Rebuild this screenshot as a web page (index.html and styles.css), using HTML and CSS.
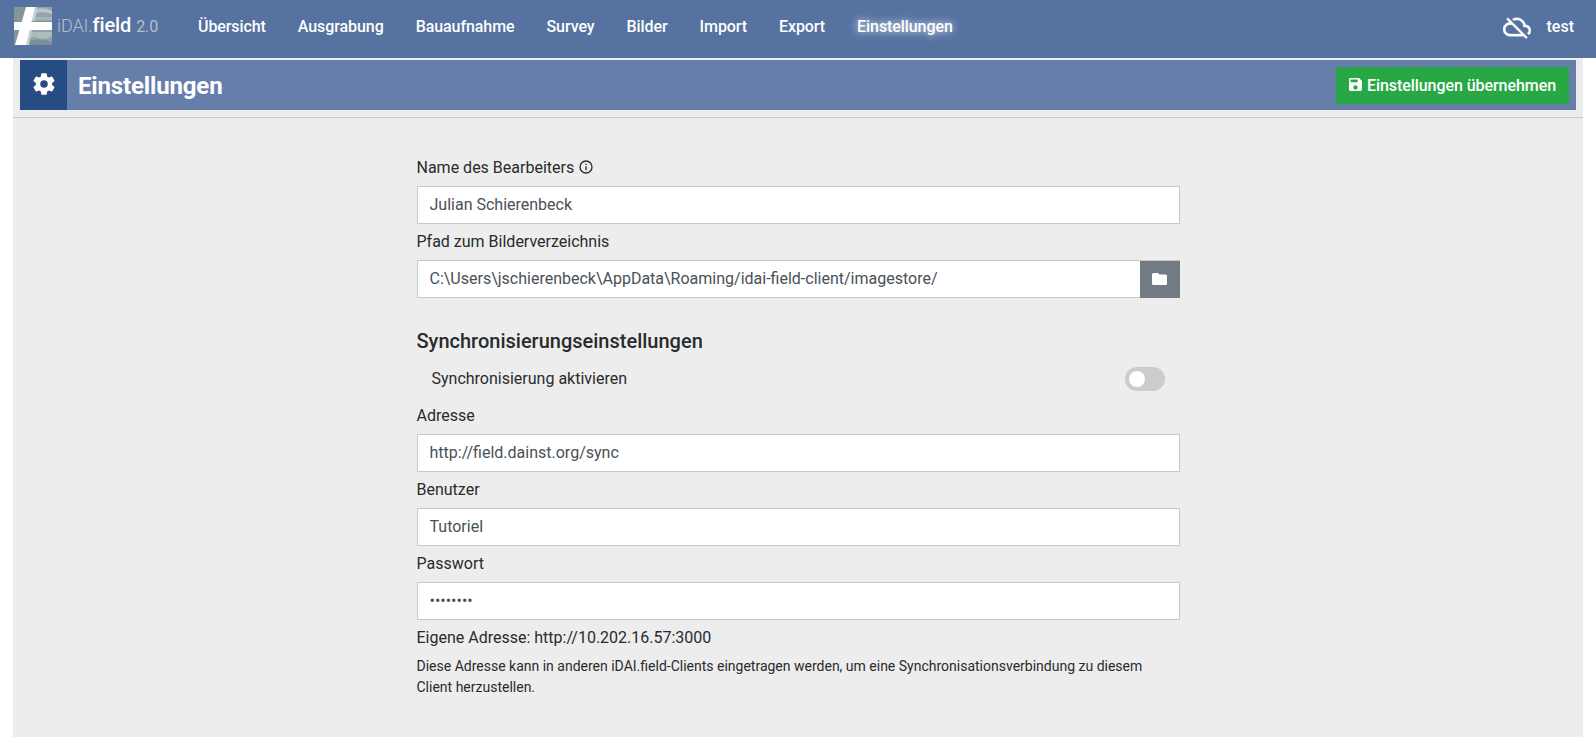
FILE: index.html
```html
<!DOCTYPE html>
<html lang="de">
<head>
<meta charset="utf-8">
<title>iDAI.field 2.0 – Einstellungen</title>
<link rel="stylesheet" href="styles.css">
</head>
<body>
<nav class="navbar">
  <svg class="logo" viewBox="0 0 38 38">
    <rect width="38" height="38" fill="#84949a"/>
    <path d="M21 0h17v14H21z" fill="#94a4aa"/>
    <path d="M22 2q8-2 16 2v3q-8-3-16-1z" fill="#b9c7cb"/>
    <path d="M22 10h16v3H22z" fill="#a6b5ba"/>
    <path d="M15 23h23v15H12z" fill="#91a2a8"/>
    <path d="M16 25h22v4q-8 5-14 2t-9 2z" fill="#abbbc0"/>
    <path d="M15 34q12-4 23 1v3H14z" fill="#7e9097"/>
    <path d="M20 0h3l-2 14h-4zM15 23h3l-3 15h-4z" fill="#c7d1d4"/>
    <path d="M0 15h38v8H0z" fill="#fff"/>
    <path d="M12 0h9L12 38H1z" fill="#fff"/>
  </svg>
  <div class="brand"><span class="brand-light">iDAI.</span><span class="brand-name">field</span> <span class="brand-version">2.0</span></div>
  <ul class="menu">
    <li>Übersicht</li><li>Ausgrabung</li><li>Bauaufnahme</li><li>Survey</li><li>Bilder</li><li>Import</li><li>Export</li><li class="active">Einstellungen</li>
  </ul>
  <div class="status">
    <svg class="cloud" viewBox="0 0 24 24"><path fill="#fff" stroke="#fff" stroke-width=".3" d="M19.35 10.04A7.49 7.49 0 0 0 12 4c-1.48 0-2.85.43-4.01 1.17l1.46 1.46A5.497 5.497 0 0 1 17.5 11.5v.5H19a3 3 0 0 1 1.79 5.4l1.42 1.42A4.99 4.99 0 0 0 24 15c0-2.64-2.05-4.78-4.65-4.96zM3 5.27l2.75 2.74C2.56 8.15 0 10.77 0 14c0 3.31 2.69 6 6 6h11.73l2 2L21 20.73 4.27 4 3 5.27zM7.73 10l8 8H6c-2.21 0-4-1.79-4-4s1.79-4 4-4h1.73z"/></svg>
    <span>test</span>
  </div>
</nav>
<main class="page">
  <header class="header">
    <div class="titlebar">
      <div class="gear-box"><svg class="gear" viewBox="0 0 24 24"><path fill="#fff" d="M19.43 12.98c.04-.32.07-.64.07-.98s-.03-.66-.07-.98l2.11-1.65a.5.5 0 0 0 .12-.64l-2-3.46a.5.5 0 0 0-.61-.22l-2.49 1c-.52-.4-1.08-.73-1.69-.98l-.38-2.65A.49.49 0 0 0 14 2h-4c-.25 0-.46.18-.49.42l-.38 2.65c-.61.25-1.17.59-1.69.98l-2.49-1a.49.49 0 0 0-.61.22l-2 3.46a.49.49 0 0 0 .12.64l2.11 1.65c-.04.32-.07.65-.07.98s.03.66.07.98l-2.11 1.65a.5.5 0 0 0-.12.64l2 3.46c.12.22.39.3.61.22l2.49-1c.52.4 1.08.73 1.69.98l.38 2.65c.03.24.24.42.49.42h4c.25 0 .46-.18.49-.42l.38-2.65c.61-.25 1.17-.59 1.69-.98l2.49 1c.23.09.49 0 .61-.22l2-3.46a.5.5 0 0 0-.12-.64l-2.11-1.65zM12 15.5a3.5 3.5 0 1 1 0-7 3.5 3.5 0 0 1 0 7z"/></svg></div>
      <h1 class="title">Einstellungen</h1>
      <button class="save"><svg class="save-icon" viewBox="0 0 18 18"><path fill="#fff" fill-rule="evenodd" d="M14 0H2a2 2 0 0 0-2 2v14c0 1.1.9 2 2 2h14a2 2 0 0 0 2-2V4l-4-4zM9 16a3 3 0 1 1 0-6 3 3 0 0 1 0 6zm3-10H2V2h10v4z"/></svg><span class="save-text">Einstellungen übernehmen</span></button>
    </div>
  </header>
  <form class="form">
    <label class="label">Name des Bearbeiters <svg class="info" viewBox="0 0 24 24"><path fill="currentColor" d="M11 17h2v-6h-2v6zm1-15a10 10 0 1 0 0 20 10 10 0 0 0 0-20zm0 18a8 8 0 1 1 0-16 8 8 0 0 1 0 16zM11 9h2V7h-2v2z"/></svg></label>
    <input class="input" type="text" value="Julian Schierenbeck">
    <label class="label">Pfad zum Bilderverzeichnis</label>
    <div class="group">
      <input class="input" type="text" value="C:\Users\jschierenbeck\AppData\Roaming/idai-field-client/imagestore/">
      <button class="browse" type="button"><svg class="folder" viewBox="0 0 20 16"><path fill="#fff" d="M8 0H2a2 2 0 0 0-2 2v12c0 1.1.9 2 2 2h16a2 2 0 0 0 2-2V4a2 2 0 0 0-2-2h-8L8 0z"/></svg></button>
    </div>
    <h2 class="subtitle">Synchronisierungseinstellungen</h2>
    <div class="toggle-row"><span>Synchronisierung aktivieren</span><span class="toggle"><span class="knob"></span></span></div>
    <label class="label">Adresse</label>
    <input class="input" type="text" value="http://field.dainst.org/sync">
    <label class="label">Benutzer</label>
    <input class="input" type="text" value="Tutoriel">
    <label class="label">Passwort</label>
    <input class="input" type="password" value="passwort">
    <p class="own">Eigene Adresse: http://10.202.16.57:3000</p>
    <p class="hint">Diese Adresse kann in anderen iDAI.field-Clients eingetragen werden, um eine Synchronisationsverbindung zu diesem Client herzustellen.</p>
  </form>
</main>
</body>
</html>
```
FILE: styles.css
```css
* { box-sizing: border-box; }
body { margin: 0; background: #fff; color: #292b2c; font: 400 16px/24px Roboto, sans-serif; overflow: hidden; }
.navbar { height: 58px; padding: 0 22px 4px 14px; display: flex; align-items: center; background: #5572a1; color: #fff; font-weight: 500; }
.logo { width: 38px; height: 38px; flex: none; margin-bottom: 2px; }
.brand { width: 141px; margin-left: 5px; padding-bottom: 3px; font-size: 20px; color: #bbbec6; white-space: nowrap; letter-spacing: -.1px; }
.brand-light { font-weight: 300; font-size: 18px; }
.brand-name { color: #fff; font-weight: 500; }
.brand-version { font-size: 16px; font-weight: 400; }
.menu { display: flex; gap: 32px; margin: 0; padding: 0; list-style: none; letter-spacing: -.08px; }
.active { text-shadow: 0 0 8px #fff; }
.status { display: flex; align-items: center; gap: 16px; margin-left: auto; }
.cloud { width: 28px; height: 28px; }
.page { height: 679px; margin: 0 13px; background: #ededed; }
.header { height: 60px; padding: 2px 7px 0; border-bottom: 1px solid #c8c8c8; }
.titlebar { height: 50px; display: flex; align-items: center; padding-right: 7px; background: #667eaa; color: #fff; }
.gear-box { width: 47px; height: 50px; display: flex; align-items: center; justify-content: center; background: #274b83; }
.gear { width: 26px; height: 26px; margin-bottom: 2px; }
.title { margin: 0 auto 0 11px; padding-top: 2px; font-size: 24px; font-weight: 700; letter-spacing: -.15px; }
.save { width: 233px; height: 37px; display: flex; align-items: center; justify-content: center; gap: 5px; padding: 0; border: 0; background: #28a745; color: #fff; font: 500 16px/24px Roboto, sans-serif; letter-spacing: -.06px; white-space: nowrap; }
.save-icon { width: 13px; height: 13px; margin-bottom: 1px; }
.save-text { padding-top: 1px; }
.form { width: 763px; margin: 0 0 0 404px; padding-top: 36px; }
.label { display: block; height: 26px; margin: 0 0 6px -.5px; padding-top: 2px; }
.info { width: 16px; height: 16px; vertical-align: -2px; }
.input { display: block; width: 100%; height: 38px; margin: 0 0 4px; padding: 5px 11.5px 7px; border: 1px solid #c8c8c8; border-radius: 0; background: #fff; color: #495057; font: 400 16px/24px Roboto, sans-serif; }
.group { display: flex; height: 38px; }
.group .input { width: 723px; border-right: 0; }
.browse { width: 40px; height: 38px; padding: 0 1px 1px 0; display: flex; align-items: center; justify-content: center; border: 0; border-top: 1px solid #c8c8c8; background: #727b84; }
.folder { width: 15px; height: 12px; }
.subtitle { margin: 31px 0 14px -.5px; font-size: 20px; line-height: 24px; font-weight: 500; }
.toggle-row { height: 24px; margin-bottom: 11px; padding: 0 15px 0 14.5px; display: flex; justify-content: space-between; }
.toggle { width: 40px; height: 24px; padding: 4px; border-radius: 12px; background: #ccc; }
.knob { display: block; width: 16px; height: 16px; border-radius: 50%; background: #fff; }
.own { margin: 0 0 6px -.5px; padding-top: 2px; }
.hint { margin: 0 0 0 -.5px; font-size: 14px; line-height: 21px; }
```
